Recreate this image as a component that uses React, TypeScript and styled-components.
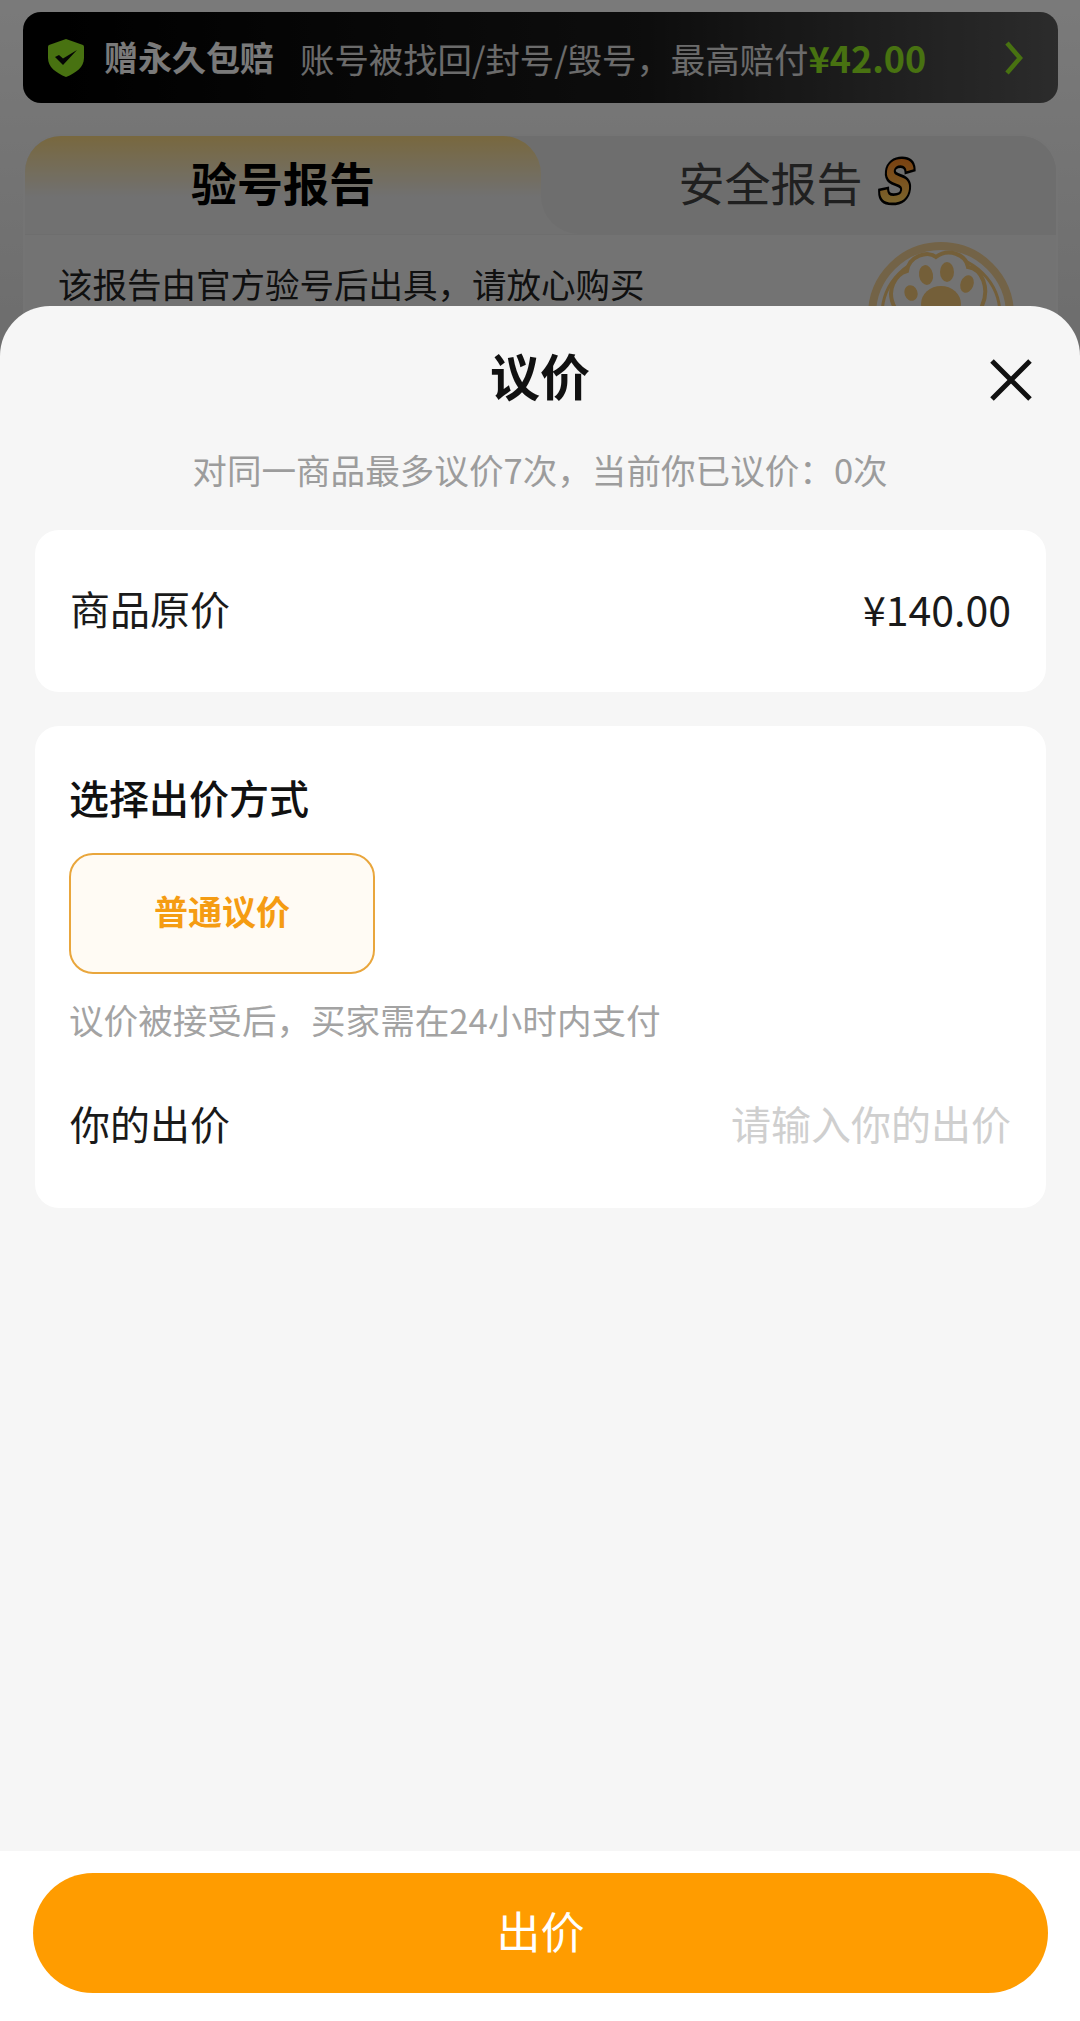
import styled, { createGlobalStyle } from "styled-components";

const GlobalStyle = createGlobalStyle`
  html, body {
    margin: 0;
    padding: 0;
    background: #f6f6f6;
  }
  * {
    box-sizing: border-box;
  }
  body {
    font-family: "Noto Sans CJK SC", "Noto Sans", sans-serif;
  }
`;

const App = () => {
  return (
    <Page>
      <GlobalStyle />
      <Backdrop>
        <Banner>
          <svg width="36" height="38" viewBox="0 0 36 38">
            <path
              d="M18 0 L35 6 Q36 6.5 36 8 L36 19 C36 28 28 34 18 38 C8 34 0 28 0 19 L0 8 Q0 6.5 1 6 Z"
              fill="#96ee24"
            />
            <path d="M7 18 L11 16 L15 19.5 L29 11 L15 26 Z" fill="#0a0a0a" />
          </svg>
          <BannerTitle>赠永久包赔</BannerTitle>
          <BannerText>
            账号被找回/封号/毁号，最高赔付<BannerAmount>¥42.00</BannerAmount>
          </BannerText>
          <BannerArrow width="20" height="34" viewBox="0 0 20 34">
            <path d="M3 2 L16 17 L3 32" fill="none" stroke="#96ee24" strokeWidth="4.5" />
          </BannerArrow>
        </Banner>
        <ReportCard>
          <ReportTabs>
            <ActiveTab>验号报告</ActiveTab>
            <InactiveTab>
              安全报告
              <SBadge width="42" height="50" viewBox="0 0 42 50">
                <defs>
                  <linearGradient id="sBadge" x1="0" y1="0" x2="0" y2="1">
                    <stop offset="0" stopColor="#ff7414" />
                    <stop offset="1" stopColor="#ffe56e" />
                  </linearGradient>
                </defs>
                <SBadgeLetter
                  transform="translate(17 46) skewX(-7) scale(0.82 1.06)"
                  textAnchor="middle"
                  fill="url(#sBadge)"
                >
                  S
                </SBadgeLetter>
              </SBadge>
            </InactiveTab>
          </ReportTabs>
          <ReportBody>
            <ReportText>该报告由官方验号后出具，请放心购买</ReportText>
            <svg width="146" height="146" viewBox="0 0 146 146">
              <circle cx="73" cy="73" r="69" fill="none" stroke="#f0cf94" strokeWidth="8" />
              <circle cx="73" cy="73" r="59" fill="none" stroke="#f2c678" strokeWidth="3" />
              <path
                d="M27 66 C17 48 28 32 39 29 C41 14 60 8 68 15 C80 6 98 12 100 25 C114 27 122 46 114 64 C108 80 92 92 73 92 C52 92 34 82 27 66 Z"
                fill="#f1f1f1"
                stroke="#f2c678"
                strokeWidth="4"
              />
              <ellipse cx="43" cy="51" rx="6.5" ry="8" fill="#f2c678" transform="rotate(-20 43 51)" />
              <ellipse cx="58" cy="33" rx="7" ry="10" fill="#f2c678" transform="rotate(-10 58 33)" />
              <ellipse cx="79" cy="30" rx="7" ry="10" fill="#f2c678" />
              <ellipse cx="99" cy="42" rx="6.5" ry="9" fill="#f2c678" transform="rotate(20 99 42)" />
              <ellipse cx="73" cy="62" rx="20" ry="18" fill="#f2c678" />
            </svg>
          </ReportBody>
        </ReportCard>
      </Backdrop>

      <Scrim />

      <Sheet>
        <SheetHeader>
          <span />
          <SheetTitle>议价</SheetTitle>
          <CloseButton>
            <svg width="44" height="44" viewBox="0 0 44 44">
              <path d="M3 3 L41 41 M41 3 L3 41" stroke="#111" strokeWidth="5" fill="none" />
            </svg>
          </CloseButton>
        </SheetHeader>
        <SheetNote>对同一商品最多议价7次，当前你已议价：0次</SheetNote>

        <SheetBody>
          <PriceCard>
            <RowLabel>商品原价</RowLabel>
            <PriceValue>¥140.00</PriceValue>
          </PriceCard>

          <OfferCard>
            <SectionTitle>选择出价方式</SectionTitle>
            <ModeButton>普通议价</ModeButton>
            <ModeHint>议价被接受后，买家需在24小时内支付</ModeHint>
            <OfferRow>
              <RowLabel>你的出价</RowLabel>
              <OfferInput placeholder="请输入你的出价" />
            </OfferRow>
          </OfferCard>
        </SheetBody>

        <SheetFooter>
          <SubmitButton>出价</SubmitButton>
        </SheetFooter>
      </Sheet>
    </Page>
  );
};

export default App;

const Page = styled.div`
  position: relative;
  width: 1080px;
  height: 2021px;
  overflow: hidden;
`;

const Backdrop = styled.div`
  height: 100%;
  padding: 12px 22px 0 23px;
  background: linear-gradient(180deg, #ffffff 0, #e6e6e6 320px);
`;

const Banner = styled.div`
  display: flex;
  align-items: center;
  height: 91px;
  padding: 0 25px;
  border-radius: 18px;
  background: linear-gradient(90deg, #000 0%, #1c1c1c 60%, #5c5c5c 100%);
`;

const BannerTitle = styled.span`
  margin-left: 20px;
  padding-bottom: 2px;
  font-size: 34px;
  font-weight: 700;
  color: #ffffff;
  white-space: nowrap;
`;

const BannerText = styled.span`
  margin-left: 26px;
  padding-bottom: 2px;
  font-size: 34.4px;
  color: #e0e0e0;
  white-space: nowrap;
`;

const BannerAmount = styled.span`
  font-size: 36px;
  font-weight: 700;
  color: #96ee24;
`;

const BannerArrow = styled.svg`
  margin-left: auto;
  margin-right: 9px;
`;

const ReportCard = styled.div`
  margin: 31px 0 0;
  height: 300px;
  border: 2px solid #f2f2f2;
  border-bottom: none;
  border-radius: 38px 38px 0 0;
  background: #f0f0f0;
  overflow: hidden;
`;

const ReportTabs = styled.div`
  display: grid;
  grid-template-columns: 516px 1fr;
  height: 99px;
  background: linear-gradient(180deg, #e6e6e6 50%, #ececec 50%);
  border-bottom: 1px solid #e6e6e6;
`;

const ActiveTab = styled.div`
  display: flex;
  align-items: center;
  justify-content: center;
  padding-bottom: 8px;
  font-size: 46px;
  font-weight: 700;
  color: #000;
  border-radius: 0 38px 0 0;
  background: linear-gradient(180deg, #fbd983 0%, #ececec 62%, #ececec 100%);
`;

const InactiveTab = styled.div`
  display: flex;
  align-items: center;
  justify-content: center;
  gap: 14px;
  padding-bottom: 8px;
  font-size: 46px;
  color: #444;
  border-radius: 0 0 0 38px;
  background: #e6e6e6;
`;

const SBadge = styled.svg`
  overflow: visible;
`;

const SBadgeLetter = styled.text`
  font-family: "Liberation Sans", sans-serif;
  font-size: 58px;
  font-weight: 700;
  font-style: italic;
  stroke: #000;
  stroke-width: 5px;
  paint-order: stroke;
`;

const ReportBody = styled.div`
  display: flex;
  align-items: flex-start;
  justify-content: space-between;
  padding: 7px 42px 0 33px;
`;

const ReportText = styled.span`
  margin-top: 21px;
  font-size: 34.5px;
  line-height: 40px;
  color: #222;
`;

const Scrim = styled.div`
  position: absolute;
  inset: 0;
  background: rgba(0, 0, 0, 0.52);
`;

const Sheet = styled.div`
  position: absolute;
  left: 0;
  right: 0;
  bottom: 0;
  height: 1715px;
  display: flex;
  flex-direction: column;
  border-radius: 50px 50px 0 0;
  background: #f6f6f6;
`;

const SheetHeader = styled.div`
  display: grid;
  grid-template-columns: 1fr auto 1fr;
  align-items: center;
  height: 144px;
`;

const SheetTitle = styled.h1`
  margin: 0 0 8px;
  font-size: 50px;
  font-weight: 700;
  line-height: 60px;
  color: #111;
`;

const CloseButton = styled.button`
  justify-self: end;
  display: flex;
  margin: 4px 47px 0 0;
  padding: 0;
  border: none;
  background: none;
`;

const SheetNote = styled.p`
  margin: 0;
  padding-bottom: 1px;
  height: 40px;
  text-align: center;
  font-size: 34.6px;
  line-height: 38px;
  color: #9c9c9c;
`;

const SheetBody = styled.div`
  display: flex;
  flex-direction: column;
  gap: 34px;
  margin-top: 40px;
  padding: 0 34px 0 35px;
`;

const PriceCard = styled.div`
  display: flex;
  align-items: center;
  justify-content: space-between;
  height: 162px;
  padding: 0 35px;
  border-radius: 24px;
  background: #fff;
`;

const RowLabel = styled.span`
  margin-bottom: 7px;
  font-size: 40px;
  line-height: 60px;
  color: #1a1a1a;
`;

const PriceValue = styled.span`
  margin-bottom: 7px;
  font-size: 41px;
  line-height: 60px;
  color: #1a1a1a;
`;

const OfferCard = styled.div`
  display: flex;
  flex-direction: column;
  align-items: flex-start;
  height: 482px;
  padding: 51px 35px 0 34px;
  border-radius: 24px;
  background: #fff;
`;

const SectionTitle = styled.h2`
  margin: 0;
  font-size: 40px;
  font-weight: 500;
  line-height: 40px;
  color: #111;
`;

const ModeButton = styled.button`
  flex-shrink: 0;
  width: 306px;
  height: 121px;
  margin-top: 36px;
  padding: 0 0 6px;
  border: 2px solid #e9a63c;
  border-radius: 24px;
  background: #fffbf4;
  font-family: inherit;
  font-size: 34px;
  font-weight: 700;
  color: #f59c12;
`;

const ModeHint = styled.p`
  margin: 25px 0 0;
  font-size: 34.6px;
  line-height: 40px;
  color: #a3a3a3;
`;

const OfferRow = styled.div`
  display: flex;
  align-items: center;
  justify-content: space-between;
  align-self: stretch;
  margin-top: 57px;
  padding-left: 1px;
  height: 60px;
`;

const OfferInput = styled.input`
  width: 400px;
  margin-bottom: 7px;
  padding: 0;
  border: none;
  outline: none;
  background: none;
  text-align: right;
  font-family: inherit;
  font-size: 40px;
  color: #1a1a1a;

  &::placeholder {
    color: #cfcfcf;
    opacity: 1;
  }
`;

const SheetFooter = styled.div`
  margin-top: auto;
  height: 170px;
  padding: 22px 32px 0 33px;
  background: #fff;
`;

const SubmitButton = styled.button`
  width: 100%;
  height: 120px;
  padding: 0 0 7px;
  border: none;
  border-radius: 60px;
  background: #ff9c00;
  font-family: inherit;
  font-size: 44px;
  color: #fff;
`;
